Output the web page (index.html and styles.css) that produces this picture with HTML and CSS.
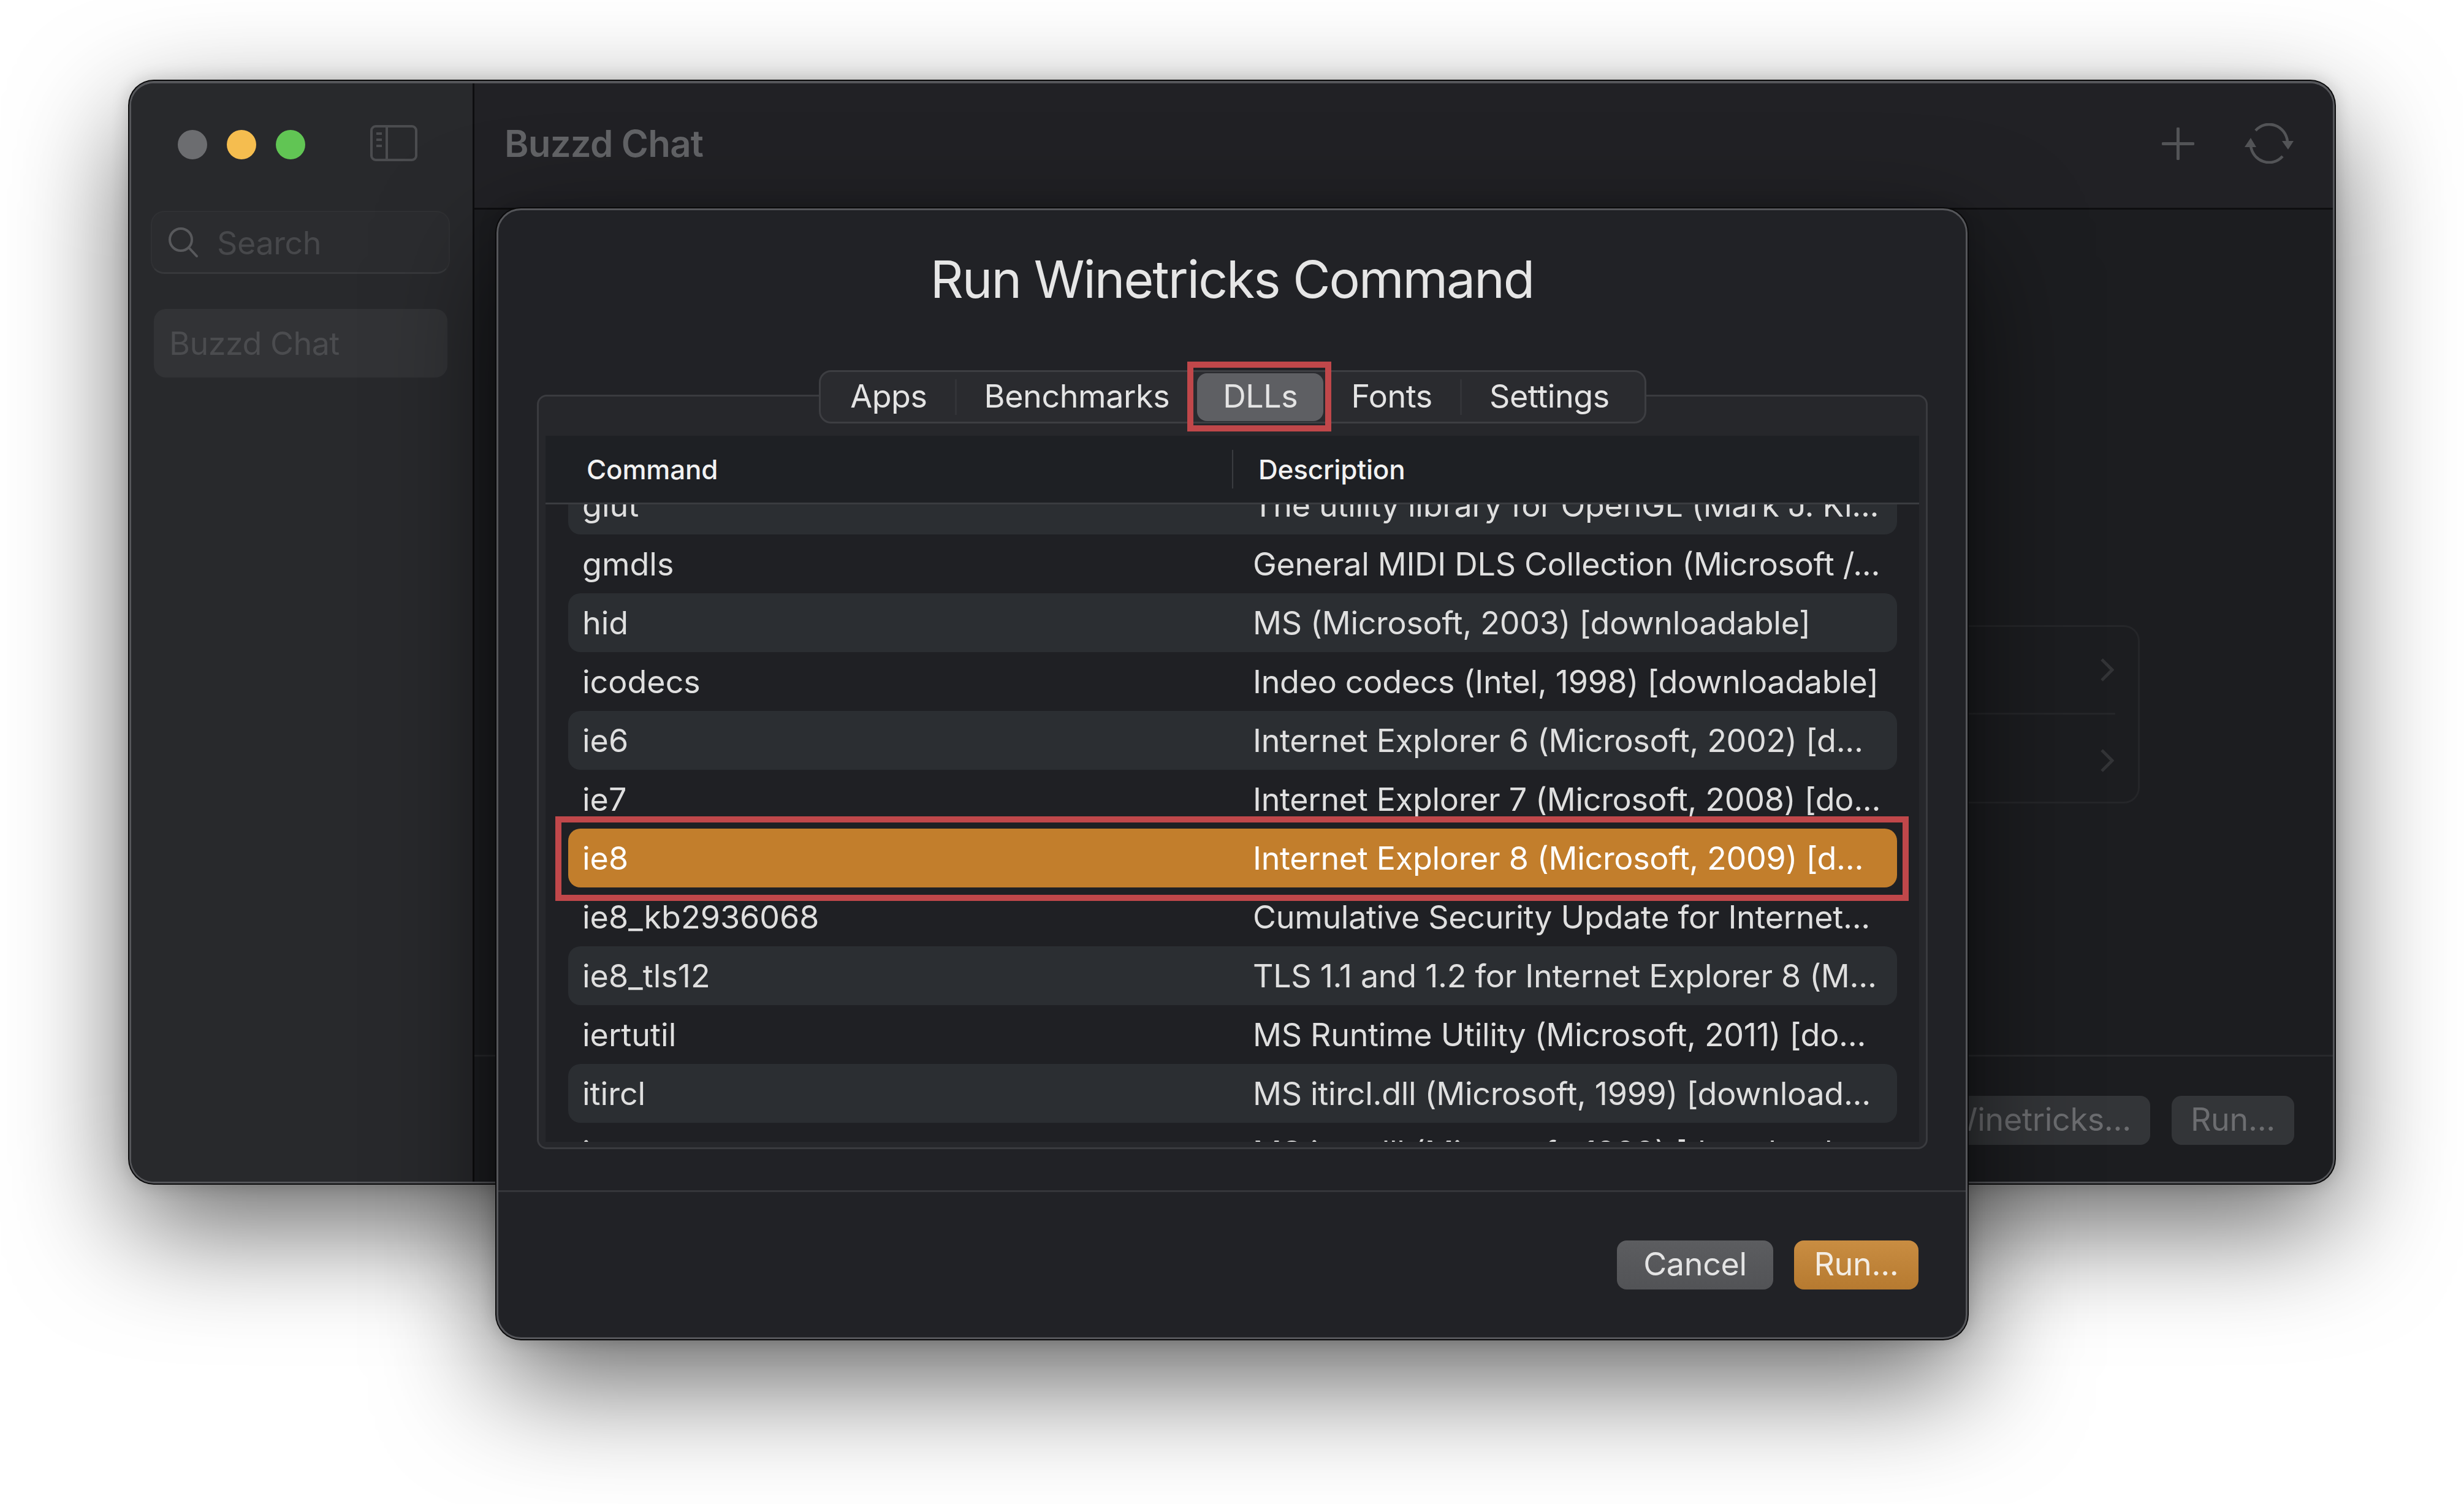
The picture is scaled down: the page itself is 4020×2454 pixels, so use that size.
FILE: index.html
```html
<!DOCTYPE html>
<html lang="en">

<head>
  <meta charset="UTF-8">
  <title>Run Winetricks Command</title>
  <link rel="stylesheet" href="styles.css">
</head>

<body>
  <div class="window">
    <aside class="sidebar">
      <div class="sidebar-top">
        <div class="lights">
          <span class="light light-grey"></span>
          <span class="light light-yellow"></span>
          <span class="light light-green"></span>
        </div>
        <svg class="sidebar-toggle" width="77" height="59" viewBox="0 0 77 59" fill="none" stroke="#4b4c4f" stroke-width="4">
          <rect x="2" y="2" width="73" height="55" rx="7"/>
          <line x1="27" y1="2" x2="27" y2="57"/>
          <line x1="10" y1="14" x2="19" y2="14"/>
          <line x1="10" y1="24" x2="19" y2="24"/>
          <line x1="10" y1="34" x2="19" y2="34"/>
        </svg>
      </div>
      <div class="search">
        <svg width="50" height="50" viewBox="0 0 50 50" fill="none" stroke="#58595c" stroke-width="4" stroke-linecap="round">
          <circle cx="21" cy="20" r="18"/>
          <line x1="34" y1="33" x2="47" y2="47"/>
        </svg>
        <span>Search</span>
      </div>
      <div class="sidebar-item">Buzzd Chat</div>
    </aside>

    <main class="main">
      <header class="titlebar">
        <div class="app-title">Buzzd Chat</div>
        <div class="title-actions">
          <svg width="53" height="53" viewBox="0 0 53 53" stroke="#535457" stroke-width="5" stroke-linecap="round">
            <line x1="26.5" y1="2" x2="26.5" y2="51"/>
            <line x1="2" y1="26.5" x2="51" y2="26.5"/>
          </svg>
          <svg width="80" height="66" viewBox="0 0 80 66" fill="none" stroke="#535457" stroke-width="4.5">
            <path d="M18 12 A30 31 0 0 1 70 30"/>
            <path d="M62 54 A30 31 0 0 1 10 36"/>
            <path d="M61 29 H80 L71 43 Z" fill="#535457" stroke="none"/>
            <path d="M0 39 H19 L10 24 Z" fill="#535457" stroke="none"/>
          </svg>
        </div>
      </header>
      <section class="content">
        <div class="card">
          <div class="card-row">
            <svg width="22" height="38" viewBox="0 0 22 38" fill="none" stroke="#333437" stroke-width="5">
              <path d="M2 2 L19 19 L2 36"/>
            </svg>
          </div>
          <div class="card-row card-row-last">
            <svg width="22" height="38" viewBox="0 0 22 38" fill="none" stroke="#333437" stroke-width="5">
              <path d="M2 2 L19 19 L2 36"/>
            </svg>
          </div>
        </div>
      </section>
      <footer class="main-footer">
        <div class="btn btn-dim">Winetricks...</div>
        <div class="btn btn-dim">Run...</div>
      </footer>
    </main>
  </div>

  <div class="dialog">
    <h1 class="dialog-title">Run Winetricks Command</h1>

    <div class="tabs">
      <div class="tab">Apps</div>
      <div class="tab tab-sep">Benchmarks</div>
      <div class="tab tab-active">DLLs</div>
      <div class="tab">Fonts</div>
      <div class="tab tab-sep">Settings</div>
    </div>

    <div class="panel">
      <div class="table-head">
        <div class="head-command">Command</div>
        <div class="head-sep"></div>
        <div class="head-description">Description</div>
      </div>
      <div class="list">
        <div class="list-inner">
          <div class="row row-alt"><span class="cell-command">glut</span><span class="cell-description">The utility library for OpenGL (Mark J. Ki...</span></div>
          <div class="row"><span class="cell-command">gmdls</span><span class="cell-description">General MIDI DLS Collection (Microsoft /...</span></div>
          <div class="row row-alt"><span class="cell-command">hid</span><span class="cell-description">MS (Microsoft, 2003) [downloadable]</span></div>
          <div class="row"><span class="cell-command">icodecs</span><span class="cell-description">Indeo codecs (Intel, 1998) [downloadable]</span></div>
          <div class="row row-alt"><span class="cell-command">ie6</span><span class="cell-description">Internet Explorer 6 (Microsoft, 2002) [d...</span></div>
          <div class="row"><span class="cell-command">ie7</span><span class="cell-description">Internet Explorer 7 (Microsoft, 2008) [do...</span></div>
          <div class="row row-selected"><span class="cell-command">ie8</span><span class="cell-description">Internet Explorer 8 (Microsoft, 2009) [d...</span></div>
          <div class="row"><span class="cell-command">ie8_kb2936068</span><span class="cell-description">Cumulative Security Update for Internet...</span></div>
          <div class="row row-alt"><span class="cell-command">ie8_tls12</span><span class="cell-description">TLS 1.1 and 1.2 for Internet Explorer 8 (M...</span></div>
          <div class="row"><span class="cell-command">iertutil</span><span class="cell-description">MS Runtime Utility (Microsoft, 2011) [do...</span></div>
          <div class="row row-alt"><span class="cell-command">itircl</span><span class="cell-description">MS itircl.dll (Microsoft, 1999) [download...</span></div>
          <div class="row"><span class="cell-command">itss</span><span class="cell-description">MS itss.dll (Microsoft, 1999) [download...</span></div>
        </div>
      </div>
    </div>

    <div class="dialog-footer">
      <div class="btn btn-cancel">Cancel</div>
      <div class="btn btn-run">Run...</div>
    </div>

    <div class="mark mark-tab"></div>
    <div class="mark mark-row"></div>
  </div>
</body>

</html>
```

FILE: styles.css
```css
/* Page */
body {
  margin: 0;
  width: 4020px;
  height: 2454px;
  overflow: hidden;
  background-color: #fff;
  font-family: Inter, "Noto Sans", sans-serif;
  position: relative;
}

/* Back window */
.window {
  position: absolute;
  left: 211px;
  top: 132px;
  width: 3598px;
  height: 1799px;
  box-sizing: border-box;
  display: flex;
  overflow: hidden;
  border: 3px solid #55565a;
  border-top-width: 4px;
  border-radius: 40px;
  background-color: #1c1d20;
  box-shadow: 0 0 0 2px #0a0a0b, 0 70px 190px rgba(0, 0, 0, 0.6), 0 0 30px rgba(0, 0, 0, 0.2);
}

.sidebar {
  width: 557px;
  flex-shrink: 0;
  background-color: #28292c;
  border-right: 3px solid #0d0d0f;
}

.sidebar-top {
  height: 208px;
  display: flex;
  align-items: flex-start;
}

.lights {
  display: flex;
  gap: 32px;
  padding: 76px 0 0 76px;
}

.light {
  width: 48px;
  height: 48px;
  border-radius: 50%;
}

.light-grey {
  background-color: #6c6d70;
}

.light-yellow {
  background-color: #f5bd4f;
}

.light-green {
  background-color: #61c554;
}

.sidebar-toggle {
  margin: 68px 0 0 106px;
}

.search {
  height: 103px;
  box-sizing: border-box;
  margin: 0 37px 0 32px;
  display: flex;
  align-items: center;
  gap: 30px;
  padding: 2px 0 0 26px;
  border: 2px solid #303134;
  border-bottom: 3px solid #37383b;
  border-radius: 22px;
  background-color: #2b2c2f;
  color: #47484b;
  font-size: 52px;
  letter-spacing: -0.4px;
}

.sidebar-item {
  height: 112px;
  margin: 57px 41px 0 37px;
  padding-left: 25px;
  display: flex;
  align-items: center;
  border-radius: 20px;
  background-color: #323336;
  color: #4b4c4f;
  font-size: 52px;
  letter-spacing: -0.5px;
}

.main {
  flex: 1;
  display: flex;
  flex-direction: column;
  min-width: 0;
}

.titlebar {
  height: 206px;
  flex-shrink: 0;
  box-sizing: border-box;
  display: flex;
  align-items: center;
  justify-content: space-between;
  padding: 0 64px 7px 49px;
  background-color: #212125;
  border-bottom: 3px solid #0e0e10;
}

.app-title {
  color: #626366;
  font-size: 60px;
  font-weight: 600;
  letter-spacing: -0.8px;
}

.title-actions {
  display: flex;
  align-items: center;
  gap: 82px;
}

.content {
  flex: 1;
  display: flex;
  justify-content: flex-end;
  padding: 678px 315px 0 0;
  background-color: #1c1d20;
}

.card {
  width: 1200px;
  height: 291px;
  box-sizing: border-box;
  border: 3px solid #252629;
  border-radius: 26px;
}

.card-row {
  height: 143px;
  box-sizing: border-box;
  display: flex;
  align-items: center;
  justify-content: flex-end;
  margin-right: 37px;
  padding-right: 2px;
  border-bottom: 3px solid #252629;
}

.card-row-last {
  height: 142px;
  padding-top: 7px;
  border-bottom: none;
}

.main-footer {
  height: 207px;
  flex-shrink: 0;
  box-sizing: border-box;
  display: flex;
  justify-content: flex-end;
  gap: 35px;
  padding: 64px 63px 0 0;
  background-color: #1c1d20;
  border-top: 3px solid #28292c;
}

/* Buttons */
.btn {
  height: 80px;
  box-sizing: border-box;
  padding: 0 31px 4px;
  display: flex;
  align-items: center;
  border-radius: 16px;
  font-size: 52px;
  letter-spacing: -0.3px;
}

.btn-dim {
  background-color: #333538;
  color: #6c6d70;
}

.btn-cancel {
  width: 255px;
  justify-content: center;
  background: linear-gradient(#5c5d60, #525356);
  color: #e4e4e4;
}

.btn-run {
  width: 203px;
  justify-content: center;
  background: linear-gradient(#c98d42, #b67a30);
  color: #f3ede4;
}

/* Dialog */
.dialog {
  position: absolute;
  left: 810px;
  top: 340px;
  width: 2400px;
  height: 1845px;
  box-sizing: border-box;
  display: flex;
  flex-direction: column;
  border: 3px solid #55565a;
  border-radius: 40px;
  background-color: #212226;
  box-shadow: 0 0 0 2px #0a0a0b, 0 70px 190px rgba(0, 0, 0, 0.6), 0 0 30px rgba(0, 0, 0, 0.2);
}

.dialog-title {
  margin: 59px 0 94px;
  height: 108px;
  line-height: 108px;
  text-align: center;
  color: #e6e6e6;
  font-size: 84px;
  font-weight: 400;
  letter-spacing: -2px;
}

.tabs {
  align-self: center;
  height: 87px;
  box-sizing: border-box;
  display: flex;
  align-items: center;
  padding: 0 12px 0 3px;
  margin-bottom: -47px;
  margin-left: 2px;
  position: relative;
  z-index: 1;
  border: 3px solid #3d3e42;
  border-radius: 20px;
  background-color: #2a2b2f;
  color: #e4e4e4;
  font-size: 52px;
  letter-spacing: -0.4px;
}

.tab {
  height: 78px;
  display: flex;
  align-items: center;
  padding: 0 45px 3px;
  box-sizing: border-box;
}

.tab-sep {
  border-left: 3px solid #333438;
  height: 58px;
}

.tab-active {
  padding: 0 42px 3px;
  border-radius: 16px;
  background-color: #5e5f63;
}

.panel {
  margin: 0 62px 67px 63px;
  height: 1231px;
  box-sizing: border-box;
  padding: 64px 11px 9px;
  border: 3px solid #3a3b3f;
  border-radius: 16px;
  background-color: #26272b;
}

.table-head {
  height: 112px;
  box-sizing: border-box;
  display: flex;
  align-items: center;
  border-bottom: 3px solid #3a3c40;
  background-color: #1e2024;
  color: #f2f2f2;
  font-size: 44px;
  font-weight: 500;
  letter-spacing: -0.2px;
}

.head-command {
  width: 1053px;
  padding-left: 67px;
  flex-shrink: 0;
}

.head-sep {
  width: 2px;
  height: 63px;
  background-color: #3a3c40;
  margin-right: 41px;
}

.list {
  height: 1040px;
  overflow: hidden;
  background-color: #1f2024;
}

/* list is scrolled part way, the first row sits under the header */
.list-inner {
  margin-top: -47px;
  padding: 0 36px 0 37px;
}

.row {
  height: 96px;
  display: flex;
  align-items: center;
  padding-left: 23px;
  border-radius: 20px;
  color: #dfdfdf;
  font-size: 52px;
  white-space: nowrap;
}

.row-alt {
  background-color: #2b2e32;
}

.row-selected {
  background-color: #c27e2c;
  color: #fff;
}

.cell-command {
  width: 1094px;
  flex-shrink: 0;
}

.cell-description {
  letter-spacing: -0.3px;
}

/* Red marks over the screenshot */
.mark {
  position: absolute;
  box-sizing: border-box;
  border: 10px solid #c0474a;
  pointer-events: none;
  z-index: 2;
}

.mark-tab {
  left: 1124px;
  top: 247px;
  width: 235px;
  height: 114px;
}

.mark-row {
  left: 93px;
  top: 989px;
  width: 2208px;
  height: 138px;
}

.dialog-footer {
  flex: 1;
  display: flex;
  justify-content: flex-end;
  gap: 34px;
  padding: 79px 77px 0 0;
  border-top: 3px solid #35363a;
}
```
